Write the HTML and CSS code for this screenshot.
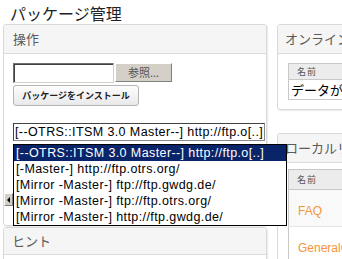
FILE: index.html
```html
<!DOCTYPE html>
<html lang="ja">
<head>
<meta charset="utf-8">
<title>パッケージ管理</title>
<link rel="stylesheet" href="styles.css">
</head>
<body>
<h1 class="title">パッケージ管理</h1>
<div class="layout">
  <div class="col-left">
    <section class="panel panel-actions">
      <div class="panel-head">操作</div>
      <div class="panel-body">
        <div class="file-row">
          <span class="file-input"></span>
          <span class="btn-browse">参照...</span>
        </div>
        <span class="btn-install">パッケージをインストール</span>
        <div class="select-wrap">
          <div class="select">[--OTRS::ITSM 3.0 Master--] http://ftp.o[..]</div>
          <ul class="dropdown">
            <li class="opt selected">[--OTRS::ITSM 3.0 Master--] http://ftp.o[..]</li>
            <li class="opt">[-Master-] http://ftp.otrs.org/</li>
            <li class="opt">[Mirror -Master-] ftp://ftp.gwdg.de/</li>
            <li class="opt">[Mirror -Master-] ftp://ftp.otrs.org/</li>
            <li class="opt">[Mirror -Master-] http://ftp.gwdg.de/</li>
          </ul>
        </div>
        <div class="hscroll"><span class="scroll-arrow"></span></div>
      </div>
    </section>
    <section class="panel panel-hint">
      <div class="panel-head">ヒント</div>
    </section>
  </div>
  <div class="col-right">
    <section class="panel panel-online">
      <div class="panel-head head-right">オンラインリポジトリ</div>
      <div class="panel-body body-right">
        <table class="grid">
          <thead><tr><th>名前</th></tr></thead>
          <tbody><tr class="row-empty"><td>データがありません。</td></tr></tbody>
        </table>
      </div>
    </section>
    <section class="panel panel-local">
      <div class="panel-head head-right">ローカルリポジトリ</div>
      <div class="panel-body body-right">
        <table class="grid">
          <thead><tr><th>名前</th></tr></thead>
          <tbody>
            <tr class="row-pkg alt"><td><span class="pkg-link">FAQ</span></td></tr>
            <tr class="row-pkg"><td><span class="pkg-link">GeneralCatalog</span></td></tr>
          </tbody>
        </table>
      </div>
    </section>
  </div>
</div>
</body>
</html>
```

FILE: styles.css
```css
html, body {
  margin: 0;
  padding: 0;
  background: #fff;
}
body {
  width: 342px;
  height: 259px;
  overflow: hidden;
  font-family: "Liberation Sans", "Noto Sans CJK JP", sans-serif;
  color: #000;
}
.title {
  margin: 0;
  padding: 4px 0 0 10px;
  height: 24px;
  box-sizing: border-box;
  font-size: 16px;
  line-height: 18px;
  font-weight: normal;
  color: #222;
  font-family: "Noto Sans CJK JP", sans-serif;
}
.layout {
  display: grid;
  grid-template-columns: 264px 240px;
  column-gap: 10px;
  padding-left: 3px;
}
.panel {
  border: 1px solid #d9d9d9;
  border-radius: 3px;
  background: #fff;
  box-shadow: 1px 1px 1px rgba(0, 0, 0, 0.08);
}
.panel-head {
  height: 28px;
  line-height: 28px;
  padding: 0 9px;
  background: #f5f5f5;
  border-bottom: 1px solid #dcdcdc;
  border-radius: 3px 3px 0 0;
  font-family: "Noto Sans CJK JP", sans-serif;
  font-size: 13px;
  color: #5a5a5a;
  white-space: nowrap;
  overflow: hidden;
}
.panel-actions {
  height: 200px;
}
.panel-body {
  padding: 9px 9px 0;
}
.file-row {
  display: flex;
  height: 20px;
}
.file-input {
  width: 101px;
  height: 20px;
  box-sizing: border-box;
  border: 1px solid;
  border-color: #6f6f6f #d4d0c8 #d4d0c8 #6f6f6f;
  box-shadow: inset 1px 1px 0 #404040;
  background: #fff;
}
.btn-browse {
  width: 57px;
  height: 19px;
  margin-left: 1px;
  box-sizing: border-box;
  background: #d4d0c8;
  border: 1px solid;
  border-color: #fff #808080 #808080 #fff;
  font-family: "Noto Sans CJK JP", sans-serif;
  font-size: 11px;
  line-height: 17px;
  text-align: center;
  color: #555;
}
.btn-install {
  display: block;
  width: 126px;
  height: 21px;
  margin-top: 2px;
  box-sizing: border-box;
  border: 1px solid #b4b4b4;
  border-radius: 3px;
  background: linear-gradient(#fdfdfd, #e9e9e9);
  font-family: "Noto Sans CJK JP", sans-serif;
  font-size: 9px;
  font-weight: bold;
  line-height: 19px;
  text-align: center;
  color: #222;
}
.select-wrap {
  position: relative;
  margin-top: 17px;
  width: 252px;
}
.select {
  height: 18px;
  box-sizing: border-box;
  border: 1px solid #555;
  border-color: #444 #888 #888 #444;
  padding-left: 1px;
  font-size: 12.5px;
  letter-spacing: 0.4px;
  line-height: 16px;
  white-space: nowrap;
  overflow: hidden;
  background: #fff;
}
.dropdown {
  position: absolute;
  top: 21px;
  left: 0;
  z-index: 10;
  width: 274px;
  margin: 0;
  padding: 0;
  list-style: none;
  box-sizing: border-box;
  border: 1px solid #000;
  background: #fff;
}
.opt {
  height: 16px;
  padding-left: 2px;
  font-size: 12.5px;
  letter-spacing: 0.4px;
  line-height: 16px;
  white-space: nowrap;
  color: #000;
}
.opt.selected {
  background: #0a246a;
  color: #fff;
}
.hscroll {
  margin: 52px 0 0 -9px;
  height: 13px;
  width: 260px;
  background: #ece9e2;
}
.scroll-arrow {
  display: block;
  width: 9px;
  height: 13px;
  box-sizing: border-box;
  background: #d4d0c8;
  border: 1px solid;
  border-color: #fff #808080 #808080 #fff;
  position: relative;
}
.scroll-arrow::before {
  content: "";
  position: absolute;
  left: 2px;
  top: 3px;
  border-style: solid;
  border-width: 3px 3px 3px 0;
  border-color: transparent #000 transparent transparent;
}
.panel-hint {
  margin-top: 1px;
  height: 40px;
}
.panel-hint .panel-head {
  background: #f5f5f5;
  height: 26px;
  line-height: 26px;
  padding-left: 8px;
}
.head-right {
  padding-left: 7px;
}
.body-right {
  padding: 9px 10px 9px;
}
.panel-local {
  margin-top: 23px;
}
.panel-local .body-right {
  padding-top: 6px;
}
.grid {
  border-collapse: collapse;
  width: 100%;
  border: 1px solid #c8c8c8;
}
.grid th {
  height: 15px;
  padding: 0 0 0 8px;
  text-align: left;
  font-family: "Noto Sans CJK JP", sans-serif;
  font-size: 9px;
  font-weight: normal;
  color: #555;
  background: #ececec;
  border-bottom: 1px solid #c8c8c8;
  line-height: 15px;
  letter-spacing: 1px;
}
.panel-local .grid th {
  height: 19px;
}
.row-empty td {
  height: 19px;
  padding: 0 0 0 2px;
  font-family: "Noto Sans CJK JP", sans-serif;
  font-size: 13px;
  line-height: 19px;
  white-space: nowrap;
}
.row-pkg td {
  height: 32px;
  padding: 4px 0 0 9px;
  border-top: 1px solid #e6e6e6;
  vertical-align: middle;
}
.row-pkg.alt td {
  background: #f9f9f9;
}
.pkg-link {
  font-size: 12px;
  color: #f7953a;
}
```
